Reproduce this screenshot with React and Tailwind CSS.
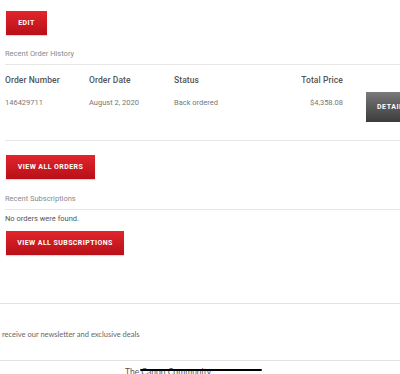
export default function App() {
  const btnRed =
    "bg-gradient-to-b from-[#e2252d] to-[#b80f18] text-white font-bold uppercase tracking-[0.06em] text-[7px] flex items-center justify-center shadow-[0_1px_1px_rgba(0,0,0,0.15)]";
  return (
    <div className="w-[400px] h-[374px] overflow-hidden bg-white relative" style={{ fontFamily: "Roboto, 'Liberation Sans', sans-serif" }}>
      <div className="pl-[6px] pt-[11px]">
        <div className={`${btnRed} w-[41px] h-[24px]`}>EDIT</div>
      </div>
      <div className="pl-[5px] mt-[13px] text-[7.5px] text-[#8a8a8a] leading-[12px]">Recent Order History</div>
      <div className="ml-[5px] mt-[4px] h-px bg-[#e6e6e6]" />
      <div className="pl-[5px] mt-[8px] flex items-center h-[14px] text-[8.5px] font-medium text-[#555] tracking-[0.01em]">
        <div className="w-[84px] shrink-0">Order Number</div>
        <div className="w-[85px] shrink-0">Order Date</div>
        <div className="w-[100px] shrink-0">Status</div>
        <div className="w-[69px] shrink-0 text-right">Total Price</div>
      </div>
      <div className="pl-[5px] mt-[5px] flex items-start h-[30px] text-[7.5px] text-[#777]">
        <div className="w-[84px] shrink-0 pt-[5px]">146429711</div>
        <div className="w-[85px] shrink-0 pt-[5px]">August 2, 2020</div>
        <div className="w-[100px] shrink-0 pt-[5px]">Back ordered</div>
        <div className="w-[69px] shrink-0 pt-[5px] text-right">$4,358.08</div>
        <div className="ml-[23px] w-[60px] h-[30px] bg-gradient-to-b from-[#7a7a7a] to-[#3c3c3c] text-white text-[7px] font-bold uppercase tracking-[0.08em] flex items-center pl-[11px] shrink-0">Details</div>
      </div>
      <div className="ml-[5px] mt-[18px] h-px bg-[#e6e6e6]" />
      <div className="pl-[6px] mt-[14px]">
        <div className={`${btnRed} w-[89px] h-[24px]`}>View all orders</div>
      </div>
      <div className="pl-[5px] mt-[14px] text-[7.5px] text-[#8a8a8a] leading-[12px]">Recent Subscriptions</div>
      <div className="ml-[5px] mt-[4px] h-px bg-[#e6e6e6]" />
      <div className="pl-[5px] mt-[3px] text-[7.5px] text-[#555] leading-[12px]">No orders were found.</div>
      <div className="pl-[6px] mt-[6px]">
        <div className={`${btnRed} w-[118px] h-[24px]`}>View all subscriptions</div>
      </div>
      <div className="mt-[48px] h-px bg-[#e2e2e2]" />
      <div className="pl-[2px] mt-[25px] text-[7.5px] text-[#666] leading-[12px]" style={{ fontFamily: "Lato, sans-serif" }}>receive our newsletter and exclusive deals</div>
      <div className="mt-[19px] h-px bg-[#e2e2e2]" />
      <div className="pl-[125px] mt-[5px] text-[8.5px] text-[#555] leading-[12px]" style={{ fontFamily: "Lato, sans-serif" }}>The Canon Community</div>
      <div className="absolute left-[140px] top-[369px] w-[122px] h-[2px] rounded-full bg-black" />
    </div>
  );
}
